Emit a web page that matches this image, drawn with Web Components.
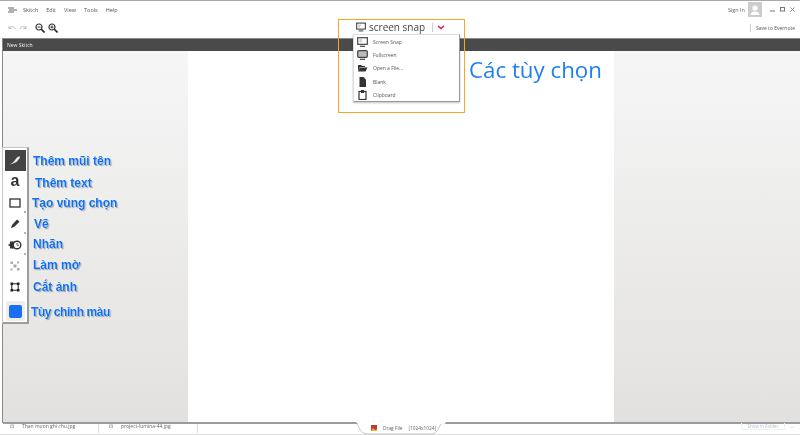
<!DOCTYPE html>
<html>
<head>
<meta charset="utf-8">
<title>Skitch</title>
<style>
  html, body { margin: 0; padding: 0; }
  body { width: 800px; height: 435px; overflow: hidden; background: #fff; font-family: "Open Sans", "Liberation Sans", sans-serif; }
</style>
</head>
<body>
<skitch-app></skitch-app>

<script>
class SkitchMenubar extends HTMLElement {
  constructor() {
    super();
    this.attachShadow({ mode: 'open' }).innerHTML = `
    <style>
      :host { display: flex; align-items: center; height: 17px; padding: 0 0 0 8px; font-size: 5.5px; color: #555; }
      .logo { width: 10px; height: 6px; margin-right: 5px; }
      nav { display: flex; gap: 8px; flex: 1; }
      .user { display: flex; align-items: center; gap: 3px; color: #666; height: 15px; align-self: flex-start; margin-top: 1px; }
      .avatar { width: 14px; height: 15px; background: #cfcfcf; display: block; }
      .win { display: flex; align-items: center; gap: 5px; margin: 0 5px 0 8px; width: 25px; }
      .win svg { display: block; }
    </style>
    <svg class="logo" viewBox="0 0 10 6"><path d="M0 1h6M1 3h8M0 5h6" stroke="#666" stroke-width="1" fill="none"/></svg>
    <nav><span>Skitch</span><span>Edit</span><span>View</span><span>Tools</span><span>Help</span></nav>
    <div class="user">
      <span>Sign In</span>
      <svg class="avatar" viewBox="0 0 14 15"><rect width="14" height="15" fill="#cdcdcd"/><circle cx="7" cy="6" r="2.6" fill="#fff"/><path d="M2.5 13c.3-3 2.5-3.6 4.500-3.600s4.200.6 4.500 3.600z" fill="#fff"/></svg>
    </div>
    <div class="win">
      <svg width="5" height="5" viewBox="0 0 5 5"><path d="M0 4h5" stroke="#777"/></svg>
      <svg width="5" height="5" viewBox="0 0 5 5"><rect x=".5" y=".5" width="4" height="3.500" fill="none" stroke="#777"/></svg>
      <svg width="5" height="5" viewBox="0 0 5 5"><path d="M.5.500l4 4M4.500.500l-4 4" stroke="#888"/></svg>
    </div>`;
  }
}

class SkitchToolbar extends HTMLElement {
  constructor() {
    super();
    this.attachShadow({ mode: 'open' }).innerHTML = `
    <style>
      :host { display: flex; align-items: center; height: 20px; padding: 0 5px 0 8px; font-size: 5px; color: #555; }
      .left { display: flex; align-items: center; gap: 3px; flex: 1; }
      svg { display: block; }
      .zoom { margin-left: 5px; }
      .save { border-left: 1px solid #ccc; padding-left: 5px; line-height: 8px; }
    </style>
    <div class="left">
      <svg width="8" height="6" viewBox="0 0 8 6"><path d="M1 3c2-2 5-2 6 1M1 1v2.500h2.500" fill="none" stroke="#bbb"/></svg>
      <svg width="8" height="6" viewBox="0 0 8 6"><path d="M7 3c-2-2-5-2-6 1M7 1v2.500H4.500" fill="none" stroke="#bbb"/></svg>
      <svg class="zoom" width="10" height="10" viewBox="0 0 10 10"><circle cx="4" cy="4" r="3" fill="none" stroke="#333" stroke-width="1.200"/><path d="M6.300 6.300L9.500 9.500" stroke="#222" stroke-width="1.600"/><path d="M2.500 4h3" stroke="#333"/></svg>
      <svg width="10" height="10" viewBox="0 0 10 10"><circle cx="4" cy="4" r="3" fill="none" stroke="#333" stroke-width="1.200"/><path d="M6.300 6.300L9.500 9.500" stroke="#222" stroke-width="1.600"/><path d="M2.500 4h3M4 2.500v3" stroke="#333"/></svg>
    </div>
    <span class="save">Save to Evernote</span>`;
  }
}

class SkitchTabbar extends HTMLElement {
  constructor() {
    super();
    this.attachShadow({ mode: 'open' }).innerHTML = `
    <style>
      :host { display: flex; align-items: center; height: 13px; margin-left: 3px; padding-left: 4px; background: #4a4a4a; border-top: 1px solid #8a8a8a; box-sizing: border-box; color: #eee; font-size: 5px; }
    </style>
    <slot></slot>`;
  }
}

class SkitchWorkspace extends HTMLElement {
  constructor() {
    super();
    this.attachShadow({ mode: 'open' }).innerHTML = `
    <style>
      :host { display: grid; grid-template-columns: 185px 426px 1fr; height: 373px; margin-left: 3px; border-bottom: 2px solid #9c9c9c; box-sizing: border-box; }
      .side { background: linear-gradient(#f6f6f6, #e2e1df); }
      .page { background: #fff; }
    </style>
    <div class="side"></div><div class="page"></div><div class="side"></div>`;
  }
}

class SkitchTools extends HTMLElement {
  constructor() {
    super();
    this.attachShadow({ mode: 'open' }).innerHTML = `
    <style>
      :host { position: absolute; left: 2px; top: 147px; width: 27px; height: 177px; background: #fff; border: 1px solid #c6c6c6; border-right: 2px solid #9c9c9c; border-bottom: 2px solid #9c9c9c; box-sizing: border-box; display: flex; flex-direction: column; align-items: center; padding-top: 2px; }
      .tool { position: relative; width: 21px; height: 21px; flex: none; display: flex; align-items: center; justify-content: center; }
      .tool.on { background: #444; }
      .tool.more::after { content: ""; position: absolute; right: 0; bottom: 0; width: 2px; height: 2px; background: #b5b5b5; }
      .a { font: bold 16px/1 "Liberation Sans", sans-serif; color: #333; margin-top: -1px; }
      .color { margin-top: 4px; width: 19px; height: 20px; background: #f0eeec; display: flex; align-items: center; justify-content: center; border-radius: 2px; }
      .swatch { width: 13px; height: 13px; background: #1a6ff0; border-radius: 2px; }
    </style>
    <div class="tool on"><svg width="10" height="9" viewBox="0 0 10 9"><path d="M0 8.500L3.500 6 7 1.500 9.500 0 9.800 2 6.500 6 3 7.500z" fill="#eee"/></svg></div>
    <div class="tool"><span class="a">a</span></div>
    <div class="tool more"><svg width="12" height="10" viewBox="0 0 12 10"><rect x="1" y="1" width="10" height="8" fill="none" stroke="#333" stroke-width="1.300"/></svg></div>
    <div class="tool more"><svg width="9" height="9" viewBox="0 0 9 9"><path d="M0 9l1-3 5-5.500 2.500 2.200L3 8z" fill="#333"/></svg></div>
    <div class="tool more"><svg width="14" height="10" viewBox="0 0 14 10"><path d="M0 5l5-3.500v7z" fill="#333"/><rect x="2" y="1.500" width="5" height="7" fill="#333"/><circle cx="9" cy="5" r="3.800" fill="#fff" stroke="#333" stroke-width="1.400"/><path d="M9 3v2.200h2" fill="none" stroke="#333" stroke-width=".8"/></svg></div>
    <div class="tool"><svg width="10" height="10" viewBox="0 0 10 10"><g fill="#aaa"><rect x=".5" y=".5" width="2.500" height="2.500"/><rect x="7" y=".5" width="2" height="2"/><rect x="3.500" y="3.500" width="3" height="3"/><rect x=".5" y="7.500" width="2" height="2"/><rect x="7" y="7" width="2.500" height="2.500"/></g></svg></div>
    <div class="tool"><svg width="10" height="10" viewBox="0 0 10 10"><rect x="1.800" y="1.800" width="6.400" height="6.400" fill="none" stroke="#222" stroke-width="1"/><g fill="#222"><rect x=".5" y=".5" width="2.600" height="2.600"/><rect x="6.900" y=".5" width="2.600" height="2.600"/><rect x=".5" y="6.900" width="2.600" height="2.600"/><rect x="6.900" y="6.900" width="2.600" height="2.600"/></g></svg></div>
    <div class="color"><div class="swatch"></div></div>`;
  }
}

class SkitchNote extends HTMLElement {
  constructor() {
    super();
    this.attachShadow({ mode: 'open' }).innerHTML = `
    <style>
      :host { position: absolute; left: var(--x); top: var(--y); font: bold 12px/16px "Liberation Sans", sans-serif; color: #0f6ef2; white-space: nowrap; text-shadow: 0 0 1px #fff, 0 0 2px #fff, 1px 1px 1px #888; }
    </style>
    <slot></slot>`;
  }
}

class SnapMenu extends HTMLElement {
  constructor() {
    super();
    const item = (icon, label) => `<li>${icon}<span>${label}</span></li>`;
    this.attachShadow({ mode: 'open' }).innerHTML = `
    <style>
      :host { position: absolute; left: 338px; top: 19px; width: 127px; height: 94px; box-sizing: border-box; border: 1px solid #f5a623; }
      .head { display: flex; align-items: center; height: 14px; padding: 0 0 0 17px; font-size: 10px; color: #444; }
      .head svg { display: block; margin-right: 3px; }
      .sep { border-left: 1px solid #ccc; height: 9px; margin: 0 4px 0 7px; }
      ul { list-style: none; margin: 0; padding: 0; position: absolute; left: 14px; top: 14px; width: 107px; height: 68px; background: #fff; border: 1px solid #ddd; border-right: 1px solid #999; border-bottom: 1px solid #999; box-shadow: 0 1px 2px rgba(0,0,0,.25); box-sizing: border-box; }
      li { display: flex; align-items: center; height: 13.300px; padding-left: 3px; font-size: 5px; color: #555; }
      li svg { width: 11px; height: 10px; flex: none; margin-right: 5px; }
    </style>
    <div class="head">
      <svg width="10" height="10" viewBox="0 0 11 10"><rect x=".7" y=".7" width="9.600" height="6.600" fill="none" stroke="#444" stroke-width="1.200"/><path d="M3 9.300h5" stroke="#444" stroke-width="1.200"/><path d="M2.500 3h3M2.500 4.800h2" stroke="#888" stroke-width=".7"/></svg>
      <span>screen snap</span>
      <span class="sep"></span>
      <svg width="8" height="5" viewBox="0 0 8 5"><path d="M1 1l3 2.500L7 1" fill="none" stroke="#e0144c" stroke-width="1.500"/></svg>
    </div>
    <ul>
      ${item('<svg viewBox="0 0 11 10"><rect x=".7" y=".7" width="9.600" height="6.600" fill="none" stroke="#444" stroke-width="1.200"/><path d="M3 9.300h5" stroke="#444" stroke-width="1.200"/><path d="M2.500 3h3M2.500 4.800h2" stroke="#888" stroke-width=".7"/></svg>', 'Screen Snap')}
      ${item('<svg viewBox="0 0 11 10"><rect x=".7" y=".7" width="9.600" height="6.600" rx="1" fill="#bbb" stroke="#444" stroke-width="1.200"/><path d="M3 9.300h5" stroke="#444" stroke-width="1.200"/></svg>', 'Fullscreen')}
      ${item('<svg viewBox="0 0 11 10"><path d="M1 2h3l1 1h3v1H3L1 8z" fill="#333"/><path d="M3 4.500h7.500L8.500 8.500H1z" fill="#333"/></svg>', 'Open a File...')}
      ${item('<svg viewBox="0 0 11 10"><path d="M2.500 0h4l2.500 2.500V10h-6.500z" fill="#333"/></svg>', 'Blank')}
      ${item('<svg viewBox="0 0 11 10"><rect x="2" y="1.500" width="7" height="8" fill="none" stroke="#333" stroke-width="1.200"/><rect x="4" y="0" width="3" height="3" fill="#333"/></svg>', 'Clipboard')}
    </ul>`;
  }
}

class SkitchFooter extends HTMLElement {
  constructor() {
    super();
    this.attachShadow({ mode: 'open' }).innerHTML = `
    <style>
      :host { display: block; height: 11px; position: relative; box-sizing: border-box; border-bottom: 1px solid #ddd; font-size: 5px; color: #666; background: #fff; }
      .files { display: flex; height: 5px; line-height: 5px; }
      .file { display: flex; gap: 8px; padding-left: 10px; width: 99px; box-sizing: border-box; border-right: 1px solid #ddd; height: 9px; }
      .tab { position: absolute; left: 356px; top: -2px; width: 90px; height: 13px; }
      .drag { position: absolute; left: 371px; top: 1px; height: 6px; display: flex; align-items: center; gap: 6px; font-size: 4.800px; }
      .drag svg { display: block; }
      .show { position: absolute; left: 741px; top: -1px; width: 44px; height: 7px; line-height: 6px; text-align: center; box-sizing: border-box; border: 1px solid #eef0f6; border-top: 0; border-radius: 0 0 2px 2px; font-size: 4.500px; color: #b6bcd0; }
      .more { position: absolute; left: 791px; top: 0; line-height: 4px; color: #999; font-size: 6px; }
    </style>
    <div class="files">
      <div class="file"><span>⊡</span><span>Than muon ghi chu.jpg</span></div>
      <div class="file"><span>⊡</span><span>project-lumina-44.jpg</span></div>
    </div>
    <svg class="tab" viewBox="0 0 90 13"><path d="M0 0h90L82 12H12z" fill="#fff"/><path d="M1 2c3 4 3 10 11 10h62c7 0 8-5 11-10" fill="none" stroke="#bbb" stroke-width=".8"/></svg>
    <div class="drag">
      <svg width="6" height="6" viewBox="0 0 6 6"><rect width="6" height="6" fill="#c0392b"/><path d="M0 6l2-3 2 2 2-1v2z" fill="#e6b54a"/></svg>
      <span>Drag File</span><span>[1024x1024]</span>
    </div>
    <div class="show">Show in Folder</div>
    <div class="more">..</div>`;
  }
}

class SkitchApp extends HTMLElement {
  constructor() {
    super();
    this.attachShadow({ mode: 'open' }).innerHTML = `
    <style>
      :host { display: block; position: relative; width: 800px; height: 435px; overflow: hidden; background: #fff; color: #444; filter: blur(.3px); }
      .topline { height: 1px; background: #aaa; }
      .title { position: absolute; left: 469px; top: 55px; font: 22.300px/30px "Open Sans", "Liberation Sans", sans-serif; color: #1f7ff2; white-space: nowrap; }
      .edge { position: absolute; left: 2px; top: 38px; width: 1px; height: 385px; background: #888; }
    </style>
    <div class="topline"></div>
    <skitch-menubar></skitch-menubar>
    <skitch-toolbar></skitch-toolbar>
    <skitch-tabbar>New Skitch</skitch-tabbar>
    <skitch-workspace></skitch-workspace>
    <skitch-footer></skitch-footer>
    <div class="edge"></div>
    <snap-menu></snap-menu>
    <skitch-tools></skitch-tools>
    <div class="title">Các tùy chọn</div>
    <skitch-note style="--x:33px;--y:153px">Thêm mũi tên</skitch-note>
    <skitch-note style="--x:35px;--y:175px">Thêm text</skitch-note>
    <skitch-note style="--x:32px;--y:195px">Tạo vùng chọn</skitch-note>
    <skitch-note style="--x:34px;--y:216px">Vẽ</skitch-note>
    <skitch-note style="--x:33px;--y:236px">Nhãn</skitch-note>
    <skitch-note style="--x:33px;--y:257px">Làm mờ</skitch-note>
    <skitch-note style="--x:33px;--y:279px">Cắt ảnh</skitch-note>
    <skitch-note style="--x:31px;--y:304px;letter-spacing:-.45px">Tùy chỉnh màu</skitch-note>`;
  }
}

customElements.define('skitch-menubar', SkitchMenubar);
customElements.define('skitch-toolbar', SkitchToolbar);
customElements.define('skitch-tabbar', SkitchTabbar);
customElements.define('skitch-workspace', SkitchWorkspace);
customElements.define('skitch-tools', SkitchTools);
customElements.define('skitch-note', SkitchNote);
customElements.define('snap-menu', SnapMenu);
customElements.define('skitch-footer', SkitchFooter);
customElements.define('skitch-app', SkitchApp);
</script>
</body>
</html>
